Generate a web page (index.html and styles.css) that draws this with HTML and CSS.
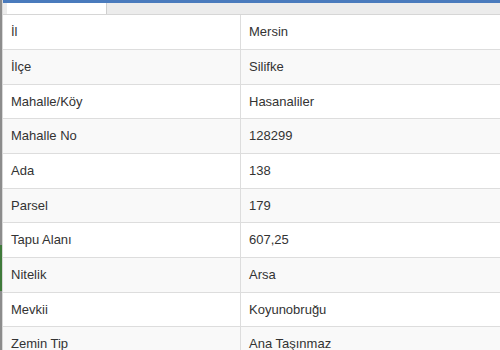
FILE: index.html
```html
<!DOCTYPE html>
<html lang="tr">
<head>
<meta charset="utf-8">
<link rel="stylesheet" href="styles.css">
</head>
<body>
<div class="rail">
  <div class="rail-gray rail-top"></div>
  <div class="rail-green"></div>
  <div class="rail-gray rail-bottom"></div>
</div>
<div class="main">
  <div class="topbar"></div>
  <div class="tabs"><div class="tab"></div></div>
  <table class="info">
    <tbody>
      <tr><td class="k">İl</td><td class="v">Mersin</td></tr>
      <tr><td class="k">İlçe</td><td class="v">Silifke</td></tr>
      <tr><td class="k">Mahalle/Köy</td><td class="v">Hasanaliler</td></tr>
      <tr><td class="k">Mahalle No</td><td class="v">128299</td></tr>
      <tr><td class="k">Ada</td><td class="v">138</td></tr>
      <tr><td class="k">Parsel</td><td class="v">179</td></tr>
      <tr><td class="k">Tapu Alanı</td><td class="v">607,25</td></tr>
      <tr><td class="k">Nitelik</td><td class="v">Arsa</td></tr>
      <tr><td class="k">Mevkii</td><td class="v">Koyunobruğu</td></tr>
      <tr><td class="k">Zemin Tip</td><td class="v">Ana Taşınmaz</td></tr>
    </tbody>
  </table>
</div>
</body>
</html>
```
FILE: styles.css
```css
html, body {
  margin: 0;
  padding: 0;
  background: #ffffff;
  height: 350px;
  overflow: hidden;
}
body {
  display: flex;
  font-family: "Liberation Sans", Arial, sans-serif;
  font-size: 13px;
  color: #333333;
}
.rail {
  width: 2px;
  display: flex;
  flex-direction: column;
  flex: none;
}
.rail-gray { background: #8c8c8c; }
.rail-top { height: 245px; flex: none; }
.rail-green { height: 46px; flex: none; background: #3f7a3a; }
.rail-bottom { flex: 1; }
.main {
  flex: 1;
  display: flex;
  flex-direction: column;
  border-left: 1px solid #d8d8d8;
}
.topbar {
  flex: none;
  height: 3px;
  background: #4a7bbd;
}
.tabs {
  flex: none;
  height: 11px;
  background: #ececec;
  border-bottom: 1px solid #d6d6d6;
  padding-left: 4px;
  display: flex;
}
.tab {
  width: 99px;
  background: #ffffff;
  border-right: 1px solid #cfcfcf;
}
.info {
  flex: none;
  width: 100%;
  border-collapse: collapse;
}
.info tr { height: 34.67px; }
.info tr:nth-child(even) td { background: #f9f9f9; }
.info td {
  padding: 0 8px;
  border-bottom: 1px solid #dddddd;
  vertical-align: middle;
  line-height: 16px;
}
.info td.k {
  width: 221px;
  border-right: 1px solid #dddddd;
}
```
